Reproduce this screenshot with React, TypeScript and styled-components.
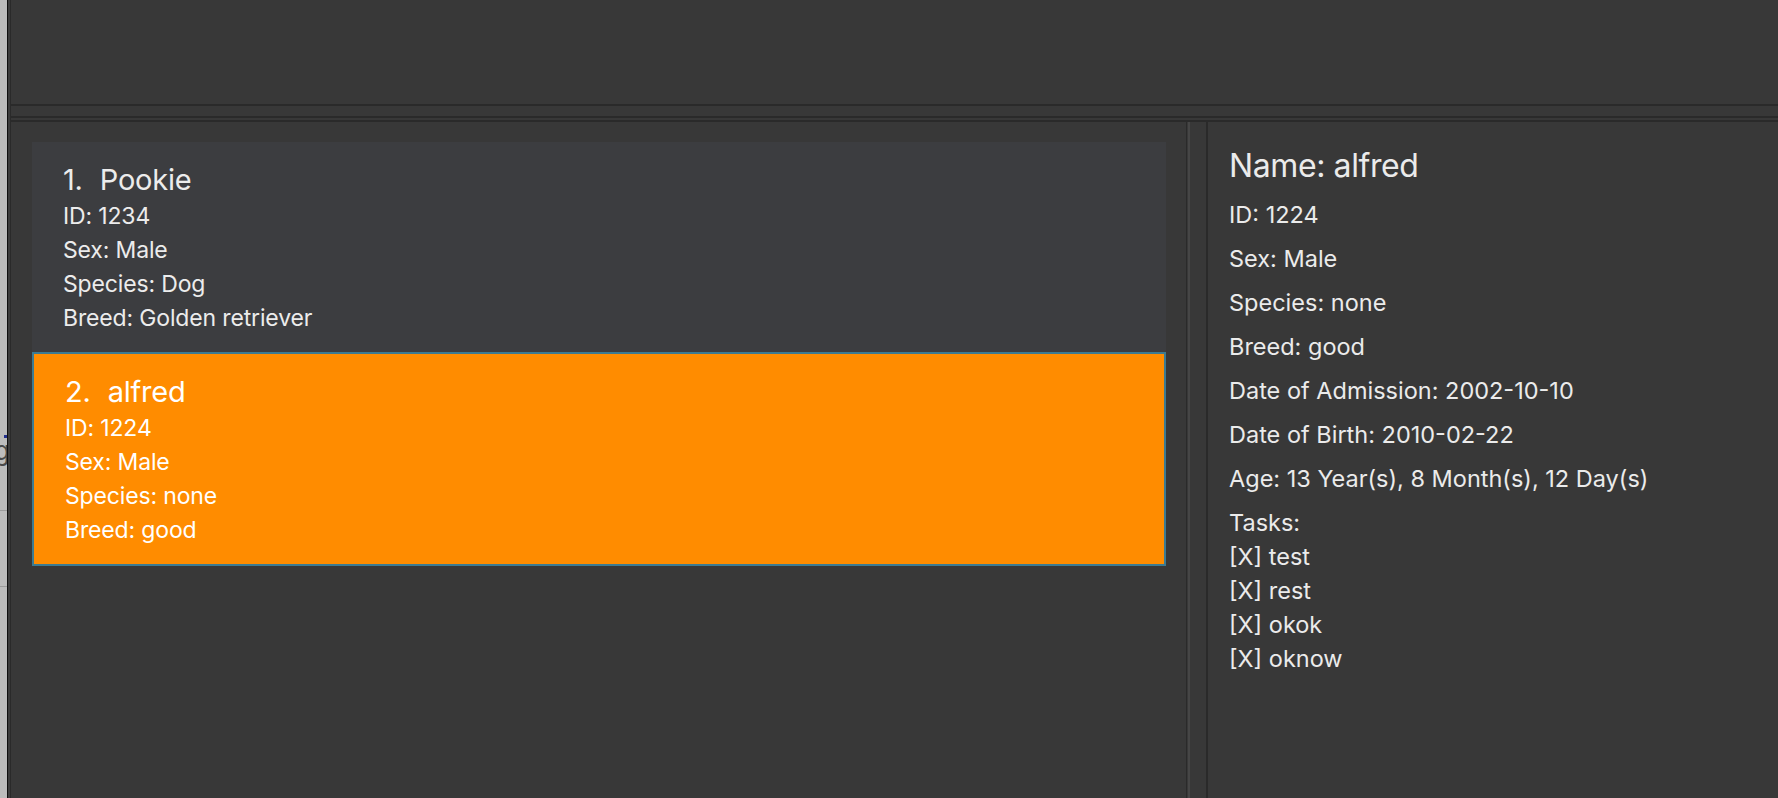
import styled, { createGlobalStyle } from "styled-components";

const GlobalStyle = createGlobalStyle`
  html, body {
    margin: 0;
    padding: 0;
    background: #383838;
    overflow: hidden;
  }
  * {
    box-sizing: border-box;
  }
`;

const Screen = styled.div`
  display: flex;
  width: 1778px;
  height: 798px;
  font-family: Inter, "Noto Sans", sans-serif;
`;

// sliver of the window that sits behind this one
const Backdrop = styled.div`
  width: 7px;
  flex-shrink: 0;
  background: #bdbdbd;
  display: flex;
  flex-direction: column;
  overflow: hidden;
`;

const BackdropDot = styled.div`
  margin: 435px 0 0 4px;
  width: 3px;
  height: 3px;
  background: #23308c;
`;

const BackdropGlyph = styled.div`
  margin-left: -6px;
  height: 34px;
  font-size: 26px;
  line-height: 26px;
  color: #4a4a4a;
`;

const BackdropRule = styled.div<{ $gap: number }>`
  margin-top: ${(p) => p.$gap}px;
  height: 1px;
  background: #9c9c9c;
`;

const WindowFrame = styled.div`
  flex: 1;
  display: flex;
  border-left: 1px solid #111;
  padding-left: 2px;
  background: #3e3e3e;
`;

const Main = styled.div`
  flex: 1;
  display: flex;
  flex-direction: column;
  background: #383838;
  border-left: 1px solid #2a2a2a;
`;

const ResultPane = styled.div`
  height: 106px;
  flex-shrink: 0;
  border-bottom: 2px solid #2a2a2a;
`;

const Band = styled.div`
  height: 12px;
  flex-shrink: 0;
  border-bottom: 2px solid #2a2a2a;
  margin-bottom: 2px;
`;

const SplitPane = styled.div`
  flex: 1;
  display: flex;
  border-top: 2px solid #2a2a2a;
  min-height: 0;
`;

const ListPanel = styled.div`
  width: 1176px;
  flex-shrink: 0;
  border-right: 1px solid #2a2a2a;
  padding: 20px 20px 0 21px;
  display: flex;
  flex-direction: column;
`;

const Divider = styled.div`
  width: 19px;
  flex-shrink: 0;
  padding-left: 1px;
  display: flex;
`;

const DividerLine = styled.div`
  width: 2px;
  background: #464646;
`;

const Card = styled.div<{ $selected?: boolean }>`
  display: flex;
  flex-direction: column;
  padding: 19px 0 17px 31px;
  background: ${(p) => (p.$selected ? "#ff8c00" : "#3c3d40")};
  border: ${(p) => (p.$selected ? "2px solid #3c7b92" : "none")};
  color: ${(p) => (p.$selected ? "#ffffff" : "#ececec")};
`;

const CardTitle = styled.div`
  display: flex;
  gap: 17px;
  font-size: 29px;
  line-height: 38px;
  letter-spacing: -0.2px;
`;

const CardLine = styled.div`
  font-size: 23px;
  line-height: 34px;
  letter-spacing: -0.15px;
`;

const DetailPanel = styled.div`
  flex: 1;
  border-left: 2px solid #2a2a2a;
  padding: 22px 0 0 21px;
  display: flex;
  flex-direction: column;
  gap: 10px;
  color: #ebebeb;
`;

const DetailName = styled.div`
  font-size: 32px;
  line-height: 44px;
  letter-spacing: -0.4px;
`;

const DetailField = styled.div`
  font-size: 23.5px;
  line-height: 34px;
`;

type Pet = {
  name: string;
  id: string;
  sex: string;
  species: string;
  breed: string;
};

const pets: Pet[] = [
  { name: "Pookie", id: "1234", sex: "Male", species: "Dog", breed: "Golden retriever" },
  { name: "alfred", id: "1224", sex: "Male", species: "none", breed: "good" },
];

const tasks = ["test", "rest", "okok", "oknow"];

const App = () => {
  const selected = pets[1];

  return (
    <>
      <GlobalStyle />
      <Screen>
        <Backdrop>
          <BackdropDot />
          <BackdropGlyph>g</BackdropGlyph>
          <BackdropRule $gap={38} />
          <BackdropRule $gap={75} />
        </Backdrop>
        <WindowFrame>
          <Main>
            <ResultPane />
            <Band />
            <SplitPane>
              <ListPanel>
                {pets.map((pet, i) => (
                  <Card key={pet.id + pet.name} $selected={pet === selected}>
                    <CardTitle>
                      <span>{i + 1}.</span>
                      <span>{pet.name}</span>
                    </CardTitle>
                    <CardLine>ID: {pet.id}</CardLine>
                    <CardLine>Sex: {pet.sex}</CardLine>
                    <CardLine>Species: {pet.species}</CardLine>
                    <CardLine>Breed: {pet.breed}</CardLine>
                  </Card>
                ))}
              </ListPanel>
              <Divider>
                <DividerLine />
              </Divider>
              <DetailPanel>
                <DetailName>Name: {selected.name}</DetailName>
                <DetailField>ID: {selected.id}</DetailField>
                <DetailField>Sex: {selected.sex}</DetailField>
                <DetailField>Species: {selected.species}</DetailField>
                <DetailField>Breed: {selected.breed}</DetailField>
                <DetailField>Date of Admission: 2002-10-10</DetailField>
                <DetailField>Date of Birth: 2010-02-22</DetailField>
                <DetailField>Age: 13 Year(s), 8 Month(s), 12 Day(s)</DetailField>
                <DetailField>
                  <div>Tasks:</div>
                  {tasks.map((t) => (
                    <div key={t}>[X] {t}</div>
                  ))}
                </DetailField>
              </DetailPanel>
            </SplitPane>
          </Main>
        </WindowFrame>
      </Screen>
    </>
  );
};

export default App;
